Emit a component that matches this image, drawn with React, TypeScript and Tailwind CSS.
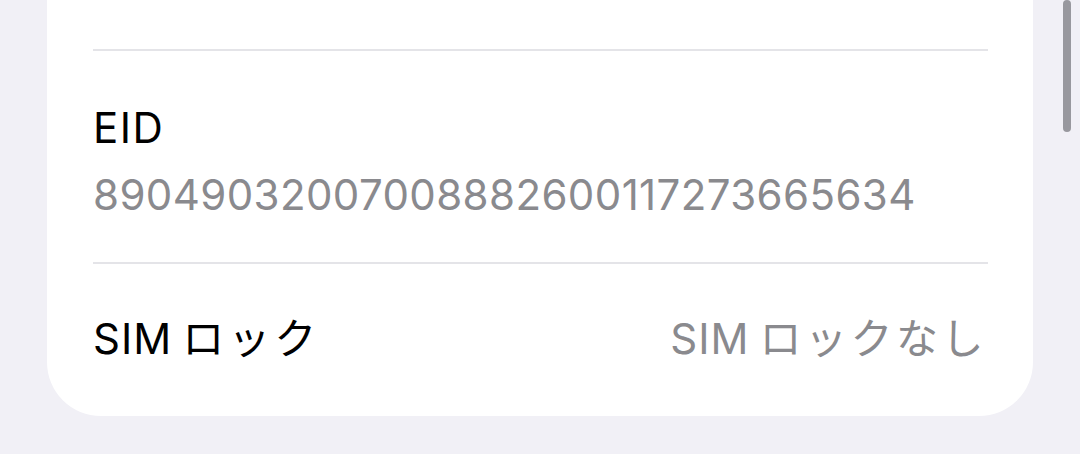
import React from "react";

const font = {
  fontFamily: '"Inter", "Noto Sans CJK JP", sans-serif',
};

export default function App() {
  return (
    <div
      className="relative w-[1080px] h-[454px] overflow-hidden bg-[#f1f0f6]"
      style={font}
    >
      <div className="ml-[47px] w-[986px] bg-white rounded-b-[54px] pl-[46px] pr-[45px]">
        <div className="h-[49px]" />
        <div className="h-[2px] bg-[#e4e4e8]" />
        <div className="h-[211px] flex flex-col pt-[52px]">
          <div className="text-[42px] leading-[50px] text-black tracking-[1.5px]">EID</div>
          <div className="mt-[17px] text-[42px] leading-[50px] text-[#8a8a8e] tracking-[0.4px]">
            89049032007008882600117273665634
          </div>
        </div>
        <div className="h-[2px] bg-[#e4e4e8]" />
        <div className="h-[152px] flex items-center justify-between pb-[2px]">
          <span className="text-[42px] leading-[50px] text-black tracking-[1px]">
            SIM<span className="ml-[10px] tracking-[4px]">ロック</span>
          </span>
          <span className="text-[42px] leading-[50px] text-[#8a8a8e] mr-[1px] tracking-[1px]">
            SIM<span className="ml-[10px] tracking-[3.5px]">ロックなし</span>
          </span>
        </div>
      </div>
      <div className="absolute left-[1063px] top-0 w-[8px] h-[132px] rounded-full bg-[#98989e]" />
    </div>
  );
}
